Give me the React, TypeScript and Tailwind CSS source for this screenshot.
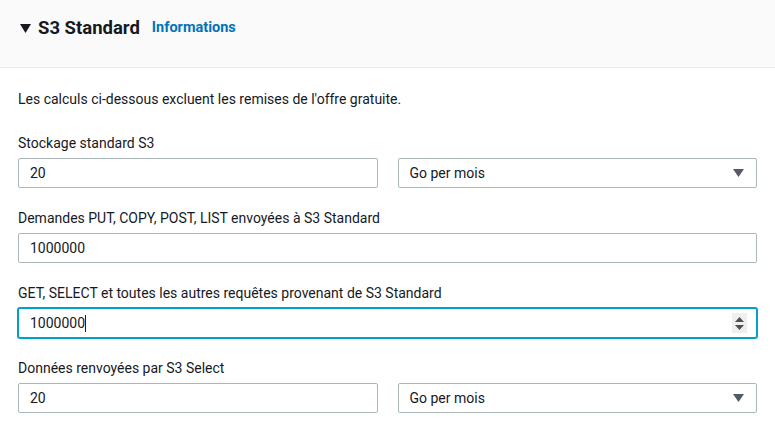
import React from "react";

const font = { fontFamily: "Roboto, 'Noto Sans', Arial, sans-serif" };

function Label({ children }: { children: React.ReactNode }) {
  return <div className="text-[14px] leading-[20px] text-[#16191f] mb-[5px]">{children}</div>;
}

function Box({ value }: { value: string }) {
  return (
    <div className="h-[30px] border border-[#aab7b8] rounded-[2px] bg-white flex items-center pl-[11px] text-[14px] text-[#16191f]">
      {value}
    </div>
  );
}

function Select({ value }: { value: string }) {
  return (
    <div className="h-[30px] border border-[#aab7b8] rounded-[2px] bg-white flex items-center justify-between pl-[11px] pr-[12px] text-[14px] text-[#16191f]">
      <span>{value}</span>
      <svg width="11" height="8" viewBox="0 0 11 8">
        <polygon points="0,0 11,0 5.5,8" fill="#545b64" />
      </svg>
    </div>
  );
}

export default function App() {
  return (
    <div className="w-[775px] h-[422px] bg-white overflow-hidden" style={font}>
      <div className="h-[68px] bg-[#fafafa] border-b border-[#eaeded] flex items-start pl-[20px] pt-[17px]">
        <div className="h-[22px] flex items-center">
          <svg width="11" height="9" viewBox="0 0 11 9" className="mr-[7px]">
            <polygon points="0,0 11,0 5.5,9" fill="#16191f" />
          </svg>
          <span className="text-[18.5px] font-bold text-[#16191f] leading-[22px]">S3 Standard</span>
          <span className="ml-[12px] text-[14.5px] font-bold text-[#0073bb] leading-[22px]">Informations</span>
        </div>
      </div>
      <div className="px-[18px] pt-[21px]">
        <div className="text-[14px] leading-[20px] text-[#16191f] mb-[24px]">
          Les calculs ci-dessous excluent les remises de l'offre gratuite.
        </div>
        <div className="flex flex-col gap-[20px]">
          <div>
            <Label>Stockage standard S3</Label>
            <div className="grid grid-cols-2 gap-[20px]">
              <Box value="20" />
              <Select value="Go per mois" />
            </div>
          </div>
          <div>
            <Label>Demandes PUT, COPY, POST, LIST envoyées à S3 Standard</Label>
            <Box value="1000000" />
          </div>
          <div>
            <Label>GET, SELECT et toutes les autres requêtes provenant de S3 Standard</Label>
            <div className="h-[30px] border border-[#00a1c9] shadow-[0_0_0_1px_#00a1c9] rounded-[2px] bg-white flex items-center justify-between pl-[11px] pr-[9px] text-[14px] text-[#16191f]">
              <span className="flex items-center">
                1000000
                <span className="inline-block w-px h-[17px] bg-[#16191f]" />
              </span>
              <div className="w-[15px] h-[20px] bg-[#efefef] flex flex-col items-center justify-center gap-[3px]">
                <svg width="9" height="5" viewBox="0 0 9 5">
                  <polygon points="0,5 9,5 4.5,0" fill="#505050" />
                </svg>
                <svg width="9" height="5" viewBox="0 0 9 5">
                  <polygon points="0,0 9,0 4.5,5" fill="#505050" />
                </svg>
              </div>
            </div>
          </div>
          <div>
            <Label>Données renvoyées par S3 Select</Label>
            <div className="grid grid-cols-2 gap-[20px]">
              <Box value="20" />
              <Select value="Go per mois" />
            </div>
          </div>
        </div>
      </div>
    </div>
  );
}
